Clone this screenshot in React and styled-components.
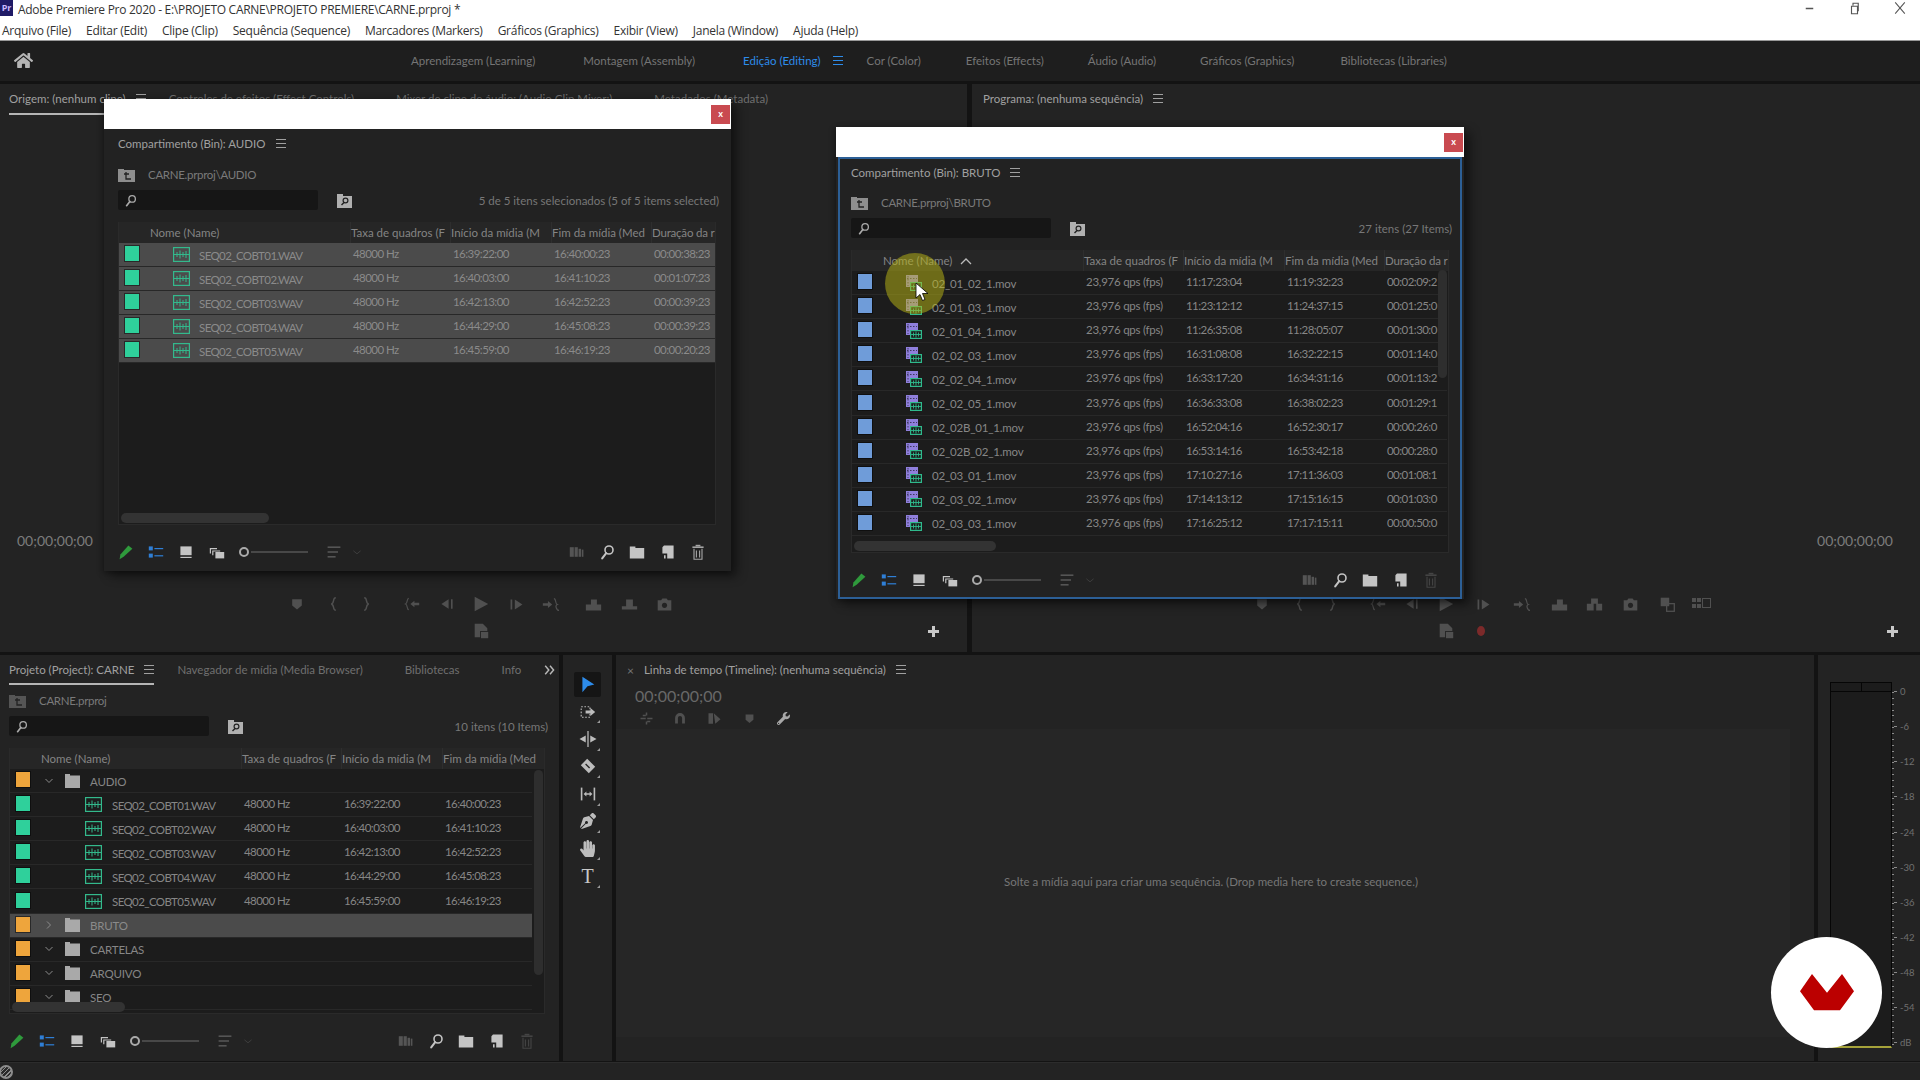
import React from "react";
import styled, { createGlobalStyle } from "styled-components";
import { FaHandPaper, FaPenNib, FaWrench, FaHome } from "react-icons/fa";

const GlobalStyle = createGlobalStyle`
  html, body {
    margin: 0;
    padding: 0;
    background: #131313;
    overflow: hidden;
  }
  * {
    box-sizing: border-box;
  }
`;

const Page = styled.div`
  position: relative;
  width: 1920px;
  height: 1080px;
  display: flex;
  flex-direction: column;
  overflow: hidden;
  background: #131313;
  font-family: "Lato", "Open Sans", sans-serif;
  font-size: 11.5px;
  color: #868686;
`;

/* window chrome */
const TitleBar = styled.div`
  height: 20px;
  background: #fff;
  display: flex;
  align-items: center;
  font-family: "Open Sans", sans-serif;
  font-size: 12px;
  color: #333;
`;

const PrLogo = styled.div`
  width: 13px;
  height: 16px;
  margin: -4px 5px 0 0;
  background: #1f1a66;
  color: #c9b8ff;
  font-size: 9px;
  font-weight: 700;
  text-align: center;
  line-height: 16px;
`;

const TitleText = styled.div`
  flex: 1;
  margin-top: -2px;
  letter-spacing: -0.28px;
`;

const WinButtons = styled.div`
  display: flex;
  align-items: center;
  margin: -4px 12px 0 0;
  gap: 30px;
  color: #555;
`;

const MenuBar = styled.div`
  height: 21px;
  background: #fff;
  border-bottom: 1px solid #999;
  display: flex;
  gap: 15px;
  padding-left: 2px;
  align-items: center;
  font-family: "Open Sans", sans-serif;
  font-size: 12px;
  color: #333;
  letter-spacing: -0.26px;
`;

const WorkspaceBar = styled.div`
  height: 40px;
  padding-bottom: 1px;
  background: #1e1e1e;
  display: flex;
  align-items: center;
  color: #757575;
`;

const HomeSlot = styled.div`
  width: 411px;
  padding-left: 14px;
  color: #b5b5b5;
  display: flex;
`;

const WorkspaceTab = styled.div`
  margin-right: ${(p) => p.$gap || 46}px;
  color: ${(p) => (p.$active ? "#2d8ceb" : "inherit")};
  white-space: nowrap;
`;

const Burger = styled.span`
  display: inline-block;
  flex: none;
  width: 10px;
  height: 9px;
  margin-left: ${(p) => p.$ml ?? 10}px;
  margin-right: ${(p) => p.$mr ?? 0}px;
  background: repeating-linear-gradient(
    to bottom,
    ${(p) => p.$color || "#a0a0a0"} 0 1px,
    transparent 1px 4px
  );
`;

/* layout */
const Main = styled.div`
  flex: 1;
  display: grid;
  grid-template-rows: 568px 406px;
  row-gap: 3px;
  padding-top: 3px;
  min-height: 0;
`;

const TopRow = styled.div`
  display: grid;
  grid-template-columns: 967px 1fr;
  column-gap: 5px;
  min-height: 0;
`;

const BottomRow = styled.div`
  display: grid;
  grid-template-columns: 559px 49px 1198px 1fr;
  column-gap: 4px;
  min-height: 0;
`;

const Panel = styled.section`
  position: relative;
  background: #232323;
  display: flex;
  flex-direction: column;
  min-width: 0;
  min-height: 0;
  overflow: hidden;
`;

const TabRow = styled.div`
  height: ${(p) => p.$h || 30}px;
  flex: none;
  display: flex;
  align-items: center;
  padding-left: ${(p) => p.$pad || 9}px;
  white-space: nowrap;
  position: relative;
`;

const Tab = styled.div`
  display: flex;
  align-items: center;
  height: 100%;
  flex: none;
  padding-bottom: 2px;
  color: ${(p) => (p.$active ? "#a0a0a0" : "#6f6f6f")};
  padding-left: ${(p) => (p.$active ? 0 : 19)}px;
  margin-left: ${(p) => (p.$active ? 0 : 23)}px;
  box-shadow: ${(p) => (p.$underline ? "inset 0 -2px 0 #b5b5b5" : "none")};
  &:nth-child(2) {
    margin-left: 4px;
  }
`;

const CloseMark = styled.span`
  color: #777;
  margin-right: 6px;
  font-size: 12px;
`;

const MoreTabs = styled.div`
  position: absolute;
  right: 3px;
  top: 9px;
  color: #b8b8b8;
  display: flex;
`;

/* monitors */
const MonitorSpace = styled.div`
  flex: 1;
`;

const Timecode = styled.div`
  height: 20px;
  line-height: 20px;
  padding: 0 ${(p) => (p.$right ? 27 : 0)}px 0 ${(p) => (p.$right ? 0 : 17)}px;
  margin-bottom: 43px;
  text-align: ${(p) => (p.$right ? "right" : "left")};
  color: #7c7c7c;
  font-size: 14px;
`;

const TransportRow = styled.div`
  height: 20px;
  flex: none;
  display: grid;
  grid-template-columns: 1fr 20px 1fr;
  padding-right: ${(p) => p.$inset || 0}px;
  margin-bottom: 7px;
`;

const TransportSide = styled.div`
  display: flex;
  align-items: center;
  justify-content: ${(p) => (p.$end ? "flex-end" : "flex-start")};
  padding-right: ${(p) => (p.$end ? 14 : 0)}px;
`;

const Slot = styled.div`
  width: 20px;
  height: 20px;
  flex: none;
  margin-left: ${(p) => p.$ml || 0}px;
  display: flex;
  align-items: center;
  justify-content: center;
  color: ${(p) => p.$color || "#505050"};
`;

const SecondRow = styled.div`
  height: 20px;
  flex: none;
  display: grid;
  grid-template-columns: 1fr 20px 1fr;
  padding-right: ${(p) => p.$inset || 0}px;
  margin-bottom: 11px;
`;

const SecondSide = styled.div`
  display: flex;
  align-items: center;
  justify-content: space-between;
  padding-left: ${(p) => p.$pl || 0}px;
  padding-right: ${(p) => p.$pr || 0}px;
`;

const RecDot = styled.div`
  width: 8px;
  height: 10px;
  border-radius: 50%;
  background: #7c2a2a;
`;

const Plus = styled.div`
  margin-left: auto;
  width: 11px;
  height: 11px;
  background:
    linear-gradient(#c8c8c8, #c8c8c8) center / 11px 3px no-repeat,
    linear-gradient(#c8c8c8, #c8c8c8) center / 3px 11px no-repeat;
`;

/* bin pieces */
const BinBody = styled.div`
  flex: 1;
  min-height: 0;
  display: flex;
  flex-direction: column;
  padding: 0 ${(p) => p.$right || 14}px 0 ${(p) => p.$left || 14}px;
`;

const PathRow = styled.div`
  height: 30px;
  flex: none;
  display: flex;
  align-items: center;
  color: #7a7a7a;
  gap: 13px;
  letter-spacing: -0.3px;
`;

const SearchRow = styled.div`
  height: 21px;
  flex: none;
  margin-bottom: 12px;
  padding-top: 1px;
  display: flex;
  align-items: center;
  color: #777;
`;

const SearchBox = styled.div`
  width: 200px;
  height: 20px;
  background: #161616;
  border-radius: 2px;
  padding-left: 6px;
  display: flex;
  align-items: center;
  color: #aaa;
  margin-right: 19px;
`;

const Count = styled.div`
  margin-left: auto;
  margin-right: -3px;
`;

const List = styled.div`
  position: relative;
  flex: 1;
  min-height: 0;
  overflow: hidden;
  background: #1c1c1c;
  border: 1px solid #2a2a2a;
  border-top: none;
`;

const COLS = "232px 100px 101px 100px 1fr";

const ListHeader = styled.div`
  height: 21px;
  display: grid;
  grid-template-columns: ${COLS};
  background: #262626;
  color: #848484;
  white-space: nowrap;
`;

const HeadCell = styled.div`
  line-height: 20px;
  padding-left: ${(p) => p.$pl ?? 0}px;
  display: flex;
  align-items: center;
  gap: 8px;
  box-shadow: ${(p) => (p.$first ? "none" : "-1px 0 0 #2e2e2e")};
`;

const LastHeadCell = styled(HeadCell)`
  letter-spacing: -0.2px;
`;

const Row = styled.div`
  height: 24.1px;
  display: grid;
  grid-template-columns: ${COLS};
  align-items: center;
  white-space: nowrap;
  border-bottom: 1px solid #282828;
  background: ${(p) => (p.$on ? "#4b4b4b" : "transparent")};
  margin-right: ${(p) => p.$mr || 0}px;
  color: ${(p) => (p.$on ? "#8a8a8a" : "#868686")};
`;

const NameCell = styled.div`
  display: flex;
  align-items: center;
  height: 100%;
  min-width: 0;
`;

const Swatch = styled.div`
  width: 14px;
  height: 15px;
  flex: none;
  margin-left: 6px;
  margin-top: -2px;
  background: ${(p) => p.$color};
  box-shadow: 0 0 0 1px rgba(0, 0, 0, 0.45);
`;

const NameText = styled.span`
  margin-left: ${(p) => p.$ml || 9}px;
  padding-top: 1px;
  letter-spacing: ${(p) => p.$ls ?? -0.2}px;
`;

const Cell = styled.div`
  padding-left: 2px;
  margin-top: -2px;
  letter-spacing: ${(p) => p.$ls ?? -0.55}px;
`;

const IconHolder = styled.div`
  flex: none;
  margin-left: ${(p) => p.$ml || 0}px;
  display: flex;
  align-items: center;
  color: #a0a0a0;
`;

const HScroll = styled.div`
  position: absolute;
  left: 2px;
  bottom: 1px;
  width: ${(p) => p.$w}px;
  height: 10px;
  border-radius: 5px;
  background: #333;
`;

const VScroll = styled.div`
  position: absolute;
  right: 1px;
  top: ${(p) => p.$top}px;
  width: 9px;
  height: ${(p) => p.$h}px;
  border-radius: 5px;
  background: #2e2e2e;
`;

const BinFooter = styled.div`
  height: ${(p) => p.$h}px;
  flex: none;
  display: flex;
  align-items: flex-start;
  padding: 18px 10px 0 0;
  margin: 0 -2px;
  color: #c4c4c4;
`;

const FootSlot = styled.div`
  width: 20px;
  height: 18px;
  flex: none;
  margin-left: ${(p) => p.$ml || 0}px;
  display: flex;
  align-items: center;
  justify-content: center;
  color: ${(p) => p.$color || "inherit"};
`;

const Knob = styled.div`
  width: 10px;
  height: 10px;
  border: 2px solid #aaa;
  border-radius: 50%;
  margin: 4px 0 0 12px;
  flex: none;
`;

const SliderLine = styled.div`
  width: 57px;
  height: 2px;
  background: #484848;
  margin: 8px 0 0 2px;
  flex: none;
`;

const FootSpacer = styled.div`
  flex: 1;
`;

/* floating windows */
const FloatWindow = styled.div`
  position: absolute;
  left: ${(p) => p.$left}px;
  top: ${(p) => p.$top}px;
  width: ${(p) => p.$w}px;
  height: 472px;
  display: flex;
  flex-direction: column;
  box-shadow: 6px 5px 10px rgba(0, 0, 0, 0.45), -1px 2px 6px rgba(0, 0, 0, 0.35);
  z-index: 5;
`;

const WhiteBar = styled.div`
  height: 30px;
  flex: none;
  background: #fff;
  display: flex;
  justify-content: flex-end;
  align-items: center;
  padding-right: 1px;
`;

const CloseBtn = styled.div`
  width: 19px;
  height: 19px;
  background: #c94a50;
  color: #fff;
  font-size: 9px;
  font-weight: 700;
  line-height: 18px;
  text-align: center;
`;

const WindowBody = styled.div`
  flex: 1;
  min-height: 0;
  display: flex;
  flex-direction: column;
  background: #222;
  border: ${(p) => (p.$focus ? "2px solid #2c5f96" : "none")};
  margin: ${(p) => (p.$focus ? "0 2px" : 0)};
`;

const Highlight = styled.div`
  position: absolute;
  left: 885px;
  top: 253px;
  width: 60px;
  height: 61px;
  border-radius: 50%;
  background: rgba(190, 185, 20, 0.5);
  z-index: 6;
`;

const Cursor = styled.svg`
  position: absolute;
  left: 915px;
  top: 282px;
  z-index: 7;
`;

/* tools */
const ToolsPanel = styled(Panel)`
  align-items: center;
  padding-top: 17px;
`;

const Tool = styled.div`
  position: relative;
  width: 27px;
  height: ${(p) => (p.$on ? 25 : 27.4)}px;
  margin-bottom: ${(p) => (p.$on ? 1 : 0)}px;
  flex: none;
  display: flex;
  align-items: center;
  justify-content: center;
  color: ${(p) => (p.$on ? "#2d8ceb" : "#bcbcbc")};
  background: ${(p) => (p.$on ? "#151515" : "transparent")};
  border-radius: 2px;
  &::after {
    content: "";
    display: ${(p) => (p.$on ? "none" : "block")};
    position: absolute;
    right: 1px;
    bottom: 2px;
    border-left: 3px solid transparent;
    border-bottom: 3px solid #999;
  }
`;

const TypeGlyph = styled.span`
  font-family: "Liberation Serif", serif;
  font-size: 20px;
  color: #c8c8c8;
  line-height: 1;
`;

/* timeline */
const TimelineCode = styled.div`
  height: 22px;
  flex: none;
  padding-left: 19px;
  line-height: 22px;
  font-size: 16px;
  color: #686868;
`;

const TimelineTools = styled.div`
  height: 22px;
  flex: none;
  padding-left: 20px;
  display: flex;
  align-items: center;
  color: #555;
`;

const TrackArea = styled.div`
  flex: 1;
  margin: 0 24px 24px 0;
  padding: 0 0 3px 16px;
  background: #262626;
  display: flex;
  align-items: center;
  justify-content: center;
  color: #767676;
`;

/* audio meter */
const MeterPanel = styled(Panel)`
  flex-direction: row;
  padding: 27px 0 0 12px;
`;

const MeterBar = styled.div`
  width: 62px;
  height: 366px;
  flex: none;
  display: flex;
  flex-direction: column;
  border: 1px solid #060606;
  border-bottom: 2px solid #a5a23a;
  background: #1c1c1c;
`;

const MeterTop = styled.div`
  height: 9px;
  flex: none;
  border-bottom: 1px solid #060606;
  background: linear-gradient(#060606, #060606) center / 1px 100% no-repeat;
`;

const Ticks = styled.div`
  width: 2px;
  height: 356px;
  margin-top: 10px;
  flex: none;
  background: repeating-linear-gradient(
    to bottom,
    #8a8a8a 0 1px,
    transparent 1px 5.87px
  );
`;

const Scale = styled.div`
  margin-top: -8px;
  display: flex;
  flex-direction: column;
`;

const ScaleMark = styled.div`
  height: 35.15px;
  display: flex;
  align-items: center;
  font-size: 9.5px;
  color: #707070;
  &::before {
    content: "";
    width: 3px;
    height: 1px;
    background: #8a8a8a;
    margin-right: 3px;
  }
`;

const StatusBar = styled.div`
  flex: none;
  height: 18px;
  margin-top: 2px;
  background: #232323;
  border-top: 1px solid #2c2c2c;
  display: flex;
  align-items: center;
`;

const CcMark = styled.div`
  width: 14px;
  height: 14px;
  margin-left: -1px;
  border-radius: 50%;
  border: 2px solid #8d8d8d;
  background: repeating-linear-gradient(135deg, #8d8d8d 0 1px, #2a2a2a 1px 3px);
`;

const LogoBadge = styled.div`
  position: absolute;
  left: 1771px;
  top: 937px;
  width: 111px;
  height: 111px;
  border-radius: 50%;
  background: #fff;
  display: flex;
  align-items: center;
  justify-content: center;
  z-index: 8;
`;

/* drawings */
const Svg = ({ w = 16, h = 16, box = "0 0 20 20", children, ...rest }) => (
  <svg width={w} height={h} viewBox={box} fill="currentColor" {...rest}>
    {children}
  </svg>
);

const Magnifier = ({ size = 14 }) => (
  <Svg w={size} h={size}>
    <circle cx="12.5" cy="7.5" r="5" fill="none" stroke="currentColor" strokeWidth="2" />
    <path d="M9 11.5 L4 18" stroke="currentColor" strokeWidth="2.6" strokeLinecap="round" />
  </Svg>
);

const UpFolder = ({ dim }) => (
  <Svg w={17} h={15} box="0 0 17 15" style={{ color: dim ? "#555" : "#8e8e8e" }}>
    <path d="M0 2h6v1h11v12H0z" />
    <path d="M8 5v7h5M6 7h5" stroke="#222" strokeWidth="1.3" fill="none" />
  </Svg>
);

const BinSearch = () => (
  <Svg w={15} h={16} box="0 0 15 16" style={{ color: "#b0b0b0" }}>
    <path d="M0 2h6v2h9v12H0z" />
    <circle cx="8.5" cy="8.5" r="2.4" fill="none" stroke="#222" strokeWidth="1.2" />
    <path d="M7 10.5L4.5 13" stroke="#222" strokeWidth="1.4" />
  </Svg>
);

const AudioIcon = () => (
  <Svg w={17} h={15} box="0 0 17 15" style={{ color: "#33b98c" }}>
    <rect x="0.6" y="0.6" width="15.8" height="13.8" fill="none" stroke="currentColor" strokeWidth="1.2" />
    <path d="M1 7.5h15M4 5v5M7 3.5v8M10 5v5M13 4v7" stroke="currentColor" strokeWidth="1" fill="none" />
  </Svg>
);

const MovieIcon = () => (
  <Svg w={16} h={16} box="0 0 16 16">
    <rect x="0" y="0" width="12" height="12" fill="#8f7fdc" />
    <path d="M2 1v10M1 3.5h10" stroke="#2a2740" strokeWidth="0.8" strokeDasharray="1.5 1.5" fill="none" />
    <rect x="4.6" y="7.6" width="10.8" height="7.8" fill="#1c1c1c" stroke="#2fb98c" strokeWidth="1.2" />
    <path d="M5 11.5h10M7.5 9.5v4M10 8.5v6M12.5 9.5v4" stroke="#2fb98c" strokeWidth="0.9" />
  </Svg>
);

const FolderIcon = () => (
  <Svg w={15} h={14} box="0 0 15 14" style={{ color: "#a9a9a9" }}>
    <path d="M0 0h5v1.5h10V14H0z" />
  </Svg>
);

const Chevron = ({ open }) => (
  <Svg w={10} h={10} box="0 0 10 10" style={{ color: "#8c8c8c", transform: open ? "none" : "rotate(-90deg)" }}>
    <path d="M1.5 3L5 6.5 8.5 3" fill="none" stroke="currentColor" strokeWidth="1" />
  </Svg>
);

const draw = {
  shield: <path d="M4 4h12v8l-6 5-6-5z" />,
  markIn: <path d="M12 3C8 3 11 9 7 10c4 1 1 7 5 7" fill="none" stroke="currentColor" strokeWidth="1.6" />,
  markOut: <path d="M8 3c4 0 1 6 5 7-4 1-1 7-5 7" fill="none" stroke="currentColor" strokeWidth="1.6" />,
  goIn: (
    <>
      <path d="M6 3C3 3 5 9 2 10c3 1 1 7 4 7" fill="none" stroke="currentColor" strokeWidth="1.4" />
      <path d="M8 10l5-4v2.5h6v3h-6V14z" />
    </>
  ),
  stepBack: <path d="M3 10l9-6v12zM15 4h2v12h-2z" />,
  play: <path d="M3 2l15 8-15 8z" />,
  stepFwd: <path d="M3 4h2v12H3zM8 4l9 6-9 6z" />,
  goOut: (
    <>
      <path d="M1 8.5h6V6l5 4-5 4v-2.5H1z" />
      <path d="M14 3c3 0 1 6 4 7-3 1-1 7 2 7" fill="none" stroke="currentColor" strokeWidth="1.4" />
    </>
  ),
  lift: <path d="M1 10h6V4h7v6h5v7H1z" />,
  extract: <path d="M1 12h5V4h8v8h5v4H1z" />,
  exportIn: <path d="M6 3h8v6h5v8h-7V9H9v8H1V9h5z" />,
  camera: (
    <>
      <path d="M2 5h4l1.5-2h5L14 5h4v12H2z" />
      <circle cx="10" cy="11" r="3" fill="#232323" />
    </>
  ),
  compare: (
    <>
      <rect x="2" y="2" width="10" height="10" />
      <rect x="9" y="9" width="9" height="9" fill="none" stroke="currentColor" strokeWidth="1.5" />
    </>
  ),
  multi: (
    <>
      <rect x="1" y="4" width="4" height="4" />
      <rect x="6" y="4" width="4" height="4" />
      <rect x="1" y="10" width="4" height="4" />
      <rect x="6" y="10" width="4" height="4" />
      <rect x="11.5" y="4.5" width="8" height="9" fill="none" stroke="currentColor" />
    </>
  ),
  toggle: (
    <>
      <path d="M3 2h9l5 5v3h-8v7H3z" />
      <rect x="10" y="11" width="8" height="7" />
    </>
  ),
  pencil: <path d="M13 2l5 4L7 16l-5 3 1-6z" />,
  listView: (
    <>
      <rect x="1" y="3" width="5" height="5" />
      <rect x="1" y="12" width="5" height="5" />
      <rect x="8" y="5" width="11" height="1.5" />
      <rect x="8" y="14" width="11" height="1.5" />
    </>
  ),
  iconView: (
    <>
      <rect x="3" y="3" width="14" height="11" />
      <rect x="3" y="16" width="14" height="1.5" />
    </>
  ),
  freeform: (
    <>
      <path d="M1 5h9v1.5H2.5V12H1z" />
      <path d="M4 8h10v1.5H5.5V14H4z" />
      <rect x="8" y="10" width="11" height="8" />
    </>
  ),
  sortMenu: (
    <>
      <rect x="2" y="3" width="16" height="2" />
      <rect x="2" y="9" width="13" height="2" />
      <rect x="2" y="15" width="10" height="2" />
    </>
  ),
  chevDown: <path d="M4 8l6 5 6-5" fill="none" stroke="currentColor" strokeWidth="1.3" />,
  automate: (
    <>
      <rect x="1" y="4" width="5" height="12" />
      <rect x="7" y="4" width="4" height="12" />
      <rect x="12" y="6" width="3" height="10" />
      <rect x="16" y="7" width="2" height="9" />
    </>
  ),
  newBin: <path d="M1 3h7v2h11v13H1z" />,
  newItem: <path d="M5 2h12v16H9v-6H3V4zM5 14h2v4H5z" />,
  trash: (
    <>
      <rect x="3" y="3" width="14" height="2" />
      <rect x="7" y="1" width="6" height="2" />
      <path d="M5 6v13h10V6M8 8v9M12 8v9" fill="none" stroke="currentColor" strokeWidth="1.4" />
    </>
  ),
  select: <path d="M4 1l14 9-8 2-6 7z" />,
  track: (
    <>
      <rect x="1.5" y="3.5" width="11" height="13" fill="none" stroke="currentColor" strokeWidth="1.4" strokeDasharray="2 2" />
      <path d="M7 8h6V5l6 5-6 5v-3H7z" />
    </>
  ),
  ripple: <path d="M9.3 1h1.4v18H9.3zM7.5 6v8L0.5 10zM12.5 6v8l7-4z" />,
  razor: (
    <>
      <path d="M9 1l10 10-8 8L1 9z" />
      <path d="M7 7.5l5 5" stroke="#232323" strokeWidth="1.6" />
    </>
  ),
  slip: (
    <>
      <rect x="1" y="2" width="2" height="16" />
      <rect x="17" y="2" width="2" height="16" />
      <path d="M4.5 10L8 7v2h4V7l3.5 3-3.5 3v-2H8v2z" />
    </>
  ),
  rippleTl: <path d="M9 2h2v4H9zM9 14h2v4H9zM2 9h7v2H2zM11 9h7v2h-7zM5 5h4v2H5zM11 13h4v2h-4z" />,
  snap: <path d="M3 18V10a7 7 0 0 1 14 0v8h-4v-8a3 3 0 0 0-6 0v8z" />,
  linked: (
    <>
      <rect x="2" y="3" width="6" height="14" />
      <path d="M9 3l9 8-7 6z" />
    </>
  ),
  minimize: <rect x="5" y="9" width="10" height="2" />,
  restore: <path d="M6 7h8v10H6zM8 6V3h7v10h-1" fill="none" stroke="currentColor" strokeWidth="1.5" />,
  close: <path d="M4 3l12 14M16 3L4 17" fill="none" stroke="currentColor" strokeWidth="1.3" />,
  more: <path d="M2 3l6 7-6 7M10 3l6 7-6 7" fill="none" stroke="currentColor" strokeWidth="2.4" />,
};

const Draw = ({ name, size = 16 }) => <Svg w={size} h={size}>{draw[name]}</Svg>;

const AUDIO = [
  ["SEQ02_COBT01.WAV", "16:39:22:00", "16:40:00:23", "00:00:38:23"],
  ["SEQ02_COBT02.WAV", "16:40:03:00", "16:41:10:23", "00:01:07:23"],
  ["SEQ02_COBT03.WAV", "16:42:13:00", "16:42:52:23", "00:00:39:23"],
  ["SEQ02_COBT04.WAV", "16:44:29:00", "16:45:08:23", "00:00:39:23"],
  ["SEQ02_COBT05.WAV", "16:45:59:00", "16:46:19:23", "00:00:20:23"],
];

// durations stop where the column ends in the bin
const CLIPS = [
  ["02_01_02_1.mov", "11:17:23:04", "11:19:32:23", "00:02:09:2"],
  ["02_01_03_1.mov", "11:23:12:12", "11:24:37:15", "00:01:25:0"],
  ["02_01_04_1.mov", "11:26:35:08", "11:28:05:07", "00:01:30:0"],
  ["02_02_03_1.mov", "16:31:08:08", "16:32:22:15", "00:01:14:0"],
  ["02_02_04_1.mov", "16:33:17:20", "16:34:31:16", "00:01:13:2"],
  ["02_02_05_1.mov", "16:36:33:08", "16:38:02:23", "00:01:29:1"],
  ["02_02B_01_1.mov", "16:52:04:16", "16:52:30:17", "00:00:26:0"],
  ["02_02B_02_1.mov", "16:53:14:16", "16:53:42:18", "00:00:28:0"],
  ["02_03_01_1.mov", "17:10:27:16", "17:11:36:03", "00:01:08:1"],
  ["02_03_02_1.mov", "17:14:13:12", "17:15:16:15", "00:01:03:0"],
  ["02_03_03_1.mov", "17:16:25:12", "17:17:15:11", "00:00:50:0"],
];

const BINS = [
  { name: "BRUTO", open: false, on: true },
  { name: "CARTELAS", open: true },
  { name: "ARQUIVO", open: true },
  { name: "SEO", open: true },
];

const ORANGE = "#eea53c";
const GREEN = "#2fd09b";
const BLUE = "#6f9cd9";

const Header = ({ sorted, short }) => (
  <ListHeader>
    <HeadCell $first $pl={31}>
      <span>Nome (Name)</span>
      {sorted && (
        <Svg w={12} h={8} box="0 0 12 8" style={{ color: "#bbb" }}>
          <path d="M1 7l5-5 5 5" fill="none" stroke="currentColor" strokeWidth="1.3" />
        </Svg>
      )}
    </HeadCell>
    <HeadCell>Taxa de quadros (F</HeadCell>
    <HeadCell>Início da mídia (M</HeadCell>
    <HeadCell>Fim da mídia (Med</HeadCell>
    {!short && <LastHeadCell>Duração da r</LastHeadCell>}
  </ListHeader>
);

const FootIcons = ({ trashDim, h }) => (
  <BinFooter $h={h}>
    <FootSlot $color="#2f9a3c"><Draw name="pencil" /></FootSlot>
    <FootSlot $ml={10} $color="#2f7fd6"><Draw name="listView" /></FootSlot>
    <FootSlot $ml={10}><Draw name="iconView" /></FootSlot>
    <FootSlot $ml={11}><Draw name="freeform" /></FootSlot>
    <Knob />
    <SliderLine />
    <FootSlot $ml={16} $color="#555"><Draw name="sortMenu" /></FootSlot>
    <FootSlot $ml={3} $color="#444"><Draw name="chevDown" size={12} /></FootSlot>
    <FootSpacer />
    <FootSlot $color="#555"><Draw name="automate" /></FootSlot>
    <FootSlot $ml={10}><Magnifier size={16} /></FootSlot>
    <FootSlot $ml={10}><Draw name="newBin" /></FootSlot>
    <FootSlot $ml={11}><Draw name="newItem" /></FootSlot>
    <FootSlot $ml={10} $color={trashDim ? "#444" : "#a5a5a5"}><Draw name="trash" /></FootSlot>
  </BinFooter>
);

const SearchLine = ({ label }) => (
  <SearchRow>
    <SearchBox><Magnifier size={13} /></SearchBox>
    <BinSearch />
    <Count>{label}</Count>
  </SearchRow>
);

const TopMonitor = ({ tabs, pad, alignRight, inset, leftSet, rightSet, second }) => (
  <Panel>
    <TabRow $pad={pad} $h={31}>{tabs}</TabRow>
    <MonitorSpace />
    <Timecode $right={alignRight}>00;00;00;00</Timecode>
    <TransportRow $inset={inset}>
      <TransportSide $end>
        {leftSet.map(([n, ml], i) => (
          <Slot key={i} $ml={ml}><Draw name={n} size={n === "markIn" || n === "markOut" ? 18 : 16} /></Slot>
        ))}
      </TransportSide>
      <Slot><Draw name="play" size={18} /></Slot>
      <TransportSide>
        {rightSet.map(([n, ml], i) => (
          <Slot key={i} $ml={ml}><Draw name={n} size={n === "multi" ? 20 : 17} /></Slot>
        ))}
      </TransportSide>
    </TransportRow>
    <SecondRow $inset={inset}>
      <span />
      <Slot><Draw name="toggle" size={18} /></Slot>
      {second}
    </SecondRow>
  </Panel>
);

const sourceLeft = [["shield"], ["markIn", 17], ["markOut", 12], ["goIn", 26], ["stepBack", 15]];
const sourceRight = [["stepFwd", 16], ["goOut", 14], ["lift", 23], ["extract", 16], ["camera", 15]];
const programLeft = [["shield"], ["markIn", 18], ["markOut", 12], ["goIn", 26], ["stepBack", 14]];
const programRight = [["stepFwd", 17], ["goOut", 18], ["lift", 18], ["exportIn", 15], ["camera", 16], ["compare", 17], ["multi", 14]];

const App = () => (
  <Page>
    <GlobalStyle />
    <TitleBar>
      <PrLogo>Pr</PrLogo>
      <TitleText>Adobe Premiere Pro 2020 - E:\PROJETO CARNE\PROJETO PREMIERE\CARNE.prproj *</TitleText>
      <WinButtons>
        <Draw name="minimize" size={15} />
        <Draw name="restore" size={15} />
        <Draw name="close" size={16} />
      </WinButtons>
    </TitleBar>
    <MenuBar>
      {[
        "Arquivo (File)",
        "Editar (Edit)",
        "Clipe (Clip)",
        "Sequência (Sequence)",
        "Marcadores (Markers)",
        "Gráficos (Graphics)",
        "Exibir (View)",
        "Janela (Window)",
        "Ajuda (Help)",
      ].map((m) => (
        <span key={m}>{m}</span>
      ))}
    </MenuBar>
    <WorkspaceBar>
      <HomeSlot><FaHome size={19} /></HomeSlot>
      <WorkspaceTab $gap={48}>Aprendizagem (Learning)</WorkspaceTab>
      <WorkspaceTab $gap={48}>Montagem (Assembly)</WorkspaceTab>
      <WorkspaceTab $active $gap={12}>Edição (Editing)</WorkspaceTab>
      <Burger $ml={0} $mr={24} $color="#2d8ceb" />
      <WorkspaceTab $gap={45}>Cor (Color)</WorkspaceTab>
      <WorkspaceTab $gap={44}>Efeitos (Effects)</WorkspaceTab>
      <WorkspaceTab $gap={44}>Áudio (Audio)</WorkspaceTab>
      <WorkspaceTab>Gráficos (Graphics)</WorkspaceTab>
      <WorkspaceTab>Bibliotecas (Libraries)</WorkspaceTab>
    </WorkspaceBar>

    <Main>
      <TopRow>
        <TopMonitor
          inset={6}
          leftSet={sourceLeft}
          rightSet={sourceRight}
          tabs={
            <>
              <Tab $active $underline>
                Origem: (nenhum clipe)
                <Burger />
              </Tab>
              <Tab>Controles de efeitos (Effect Controls)</Tab>
              <Tab>Mixer de clipe de áudio: (Audio Clip Mixer:)</Tab>
              <Tab>Metadados (Metadata)</Tab>
            </>
          }
          second={
            <SecondSide $pr={22}>
              <Plus />
            </SecondSide>
          }
        />
        <TopMonitor
          pad={11}
          alignRight
          leftSet={programLeft}
          rightSet={programRight}
          tabs={
            <Tab $active>
              Programa: (nenhuma sequência)
              <Burger />
            </Tab>
          }
          second={
            <SecondSide $pl={21} $pr={22}>
              <RecDot />
              <Plus />
            </SecondSide>
          }
        />
      </TopRow>

      <BottomRow>
        <Panel>
          <TabRow>
            <Tab $active $underline>
              Projeto (Project): CARNE
              <Burger />
            </Tab>
            <Tab>Navegador de mídia (Media Browser)</Tab>
            <Tab>Bibliotecas</Tab>
            <Tab>Info</Tab>
            <MoreTabs><Draw name="more" size={12} /></MoreTabs>
          </TabRow>
          <BinBody $left={9}>
            <PathRow>
              <UpFolder dim />
              CARNE.prproj
            </PathRow>
            <SearchLine label="10 itens (10 Items)" />
            <List>
              <Header short />
              <Row $mr={12}>
                <NameCell>
                  <Swatch $color={ORANGE} />
                  <IconHolder $ml={14}><Chevron open /></IconHolder>
                  <IconHolder $ml={11}><FolderIcon /></IconHolder>
                  <NameText $ml={10}>AUDIO</NameText>
                </NameCell>
              </Row>
              {AUDIO.map((a) => (
                <Row key={a[0]} $mr={12}>
                  <NameCell>
                    <Swatch $color={GREEN} />
                    <IconHolder $ml={55}><AudioIcon /></IconHolder>
                    <NameText $ml={10} $ls={-0.6}>{a[0]}</NameText>
                  </NameCell>
                  <Cell>48000 Hz</Cell>
                  <Cell>{a[1]}</Cell>
                  <Cell>{a[2]}</Cell>
                </Row>
              ))}
              {BINS.map((b) => (
                <Row key={b.name} $on={b.on} $mr={12}>
                  <NameCell>
                    <Swatch $color={ORANGE} />
                    <IconHolder $ml={14}><Chevron open={b.open} /></IconHolder>
                    <IconHolder $ml={11}><FolderIcon /></IconHolder>
                    <NameText $ml={10}>{b.name}</NameText>
                  </NameCell>
                </Row>
              ))}
              <VScroll $top={22} $h={205} />
              <HScroll $w={113} />
            </List>
            <FootIcons trashDim h={47} />
          </BinBody>
        </Panel>

        <ToolsPanel>
          <Tool $on><Draw name="select" size={17} /></Tool>
          <Tool><Draw name="track" /></Tool>
          <Tool><Draw name="ripple" size={18} /></Tool>
          <Tool><Draw name="razor" /></Tool>
          <Tool><Draw name="slip" /></Tool>
          <Tool><FaPenNib size={16} /></Tool>
          <Tool><FaHandPaper size={17} /></Tool>
          <Tool><TypeGlyph>T</TypeGlyph></Tool>
        </ToolsPanel>

        <Panel>
          <TabRow $pad={11}>
            <CloseMark>×</CloseMark>
            <Tab $active>
              Linha de tempo (Timeline): (nenhuma sequência)
              <Burger />
            </Tab>
          </TabRow>
          <TimelineCode>00;00;00;00</TimelineCode>
          <TimelineTools>
            <Slot><Draw name="rippleTl" size={15} /></Slot>
            <Slot $ml={14}><Draw name="snap" size={14} /></Slot>
            <Slot $ml={14}><Draw name="linked" size={15} /></Slot>
            <Slot $ml={15}><Draw name="shield" size={13} /></Slot>
            <Slot $ml={14} $color="#a8a8a8"><FaWrench size={13} /></Slot>
          </TimelineTools>
          <TrackArea>Solte a mídia aqui para criar uma sequência. (Drop media here to create sequence.)</TrackArea>
        </Panel>

        <MeterPanel>
          <MeterBar>
            <MeterTop />
          </MeterBar>
          <Ticks />
          <Scale>
            {["0", "-6", "-12", "-18", "-24", "-30", "-36", "-42", "-48", "-54", "dB"].map((v) => (
              <ScaleMark key={v}>{v}</ScaleMark>
            ))}
          </Scale>
        </MeterPanel>
      </BottomRow>
    </Main>

    <StatusBar><CcMark /></StatusBar>

    <FloatWindow $left={104} $top={99} $w={627}>
      <WhiteBar><CloseBtn>x</CloseBtn></WhiteBar>
      <WindowBody>
        <TabRow $pad={14}>
          <Tab $active>
            Compartimento (Bin): AUDIO
            <Burger />
          </Tab>
        </TabRow>
        <BinBody $right={15}>
          <PathRow>
            <UpFolder />
            CARNE.prproj\AUDIO
          </PathRow>
          <SearchLine label="5 de 5 itens selecionados (5 of 5 items selected)" />
          <List>
            <Header />
            {AUDIO.map((a) => (
              <Row key={a[0]} $on>
                <NameCell>
                  <Swatch $color={GREEN} />
                  <IconHolder $ml={34}><AudioIcon /></IconHolder>
                  <NameText $ls={-0.6}>{a[0]}</NameText>
                </NameCell>
                <Cell>48000 Hz</Cell>
                <Cell>{a[1]}</Cell>
                <Cell>{a[2]}</Cell>
                <Cell>{a[3]}</Cell>
              </Row>
            ))}
            <HScroll $w={148} />
          </List>
          <FootIcons h={46} />
        </BinBody>
      </WindowBody>
    </FloatWindow>

    <FloatWindow $left={836} $top={127} $w={628}>
      <WhiteBar><CloseBtn>x</CloseBtn></WhiteBar>
      <WindowBody $focus>
        <TabRow $h={28} $pad={11}>
          <Tab $active>
            Compartimento (Bin): BRUTO
            <Burger />
          </Tab>
        </TabRow>
        <BinBody $left={11} $right={11}>
          <PathRow>
            <UpFolder />
            CARNE.prproj\BRUTO
          </PathRow>
          <SearchLine label="27 itens (27 Items)" />
          <List>
            <Header sorted />
            {CLIPS.map((c) => (
              <Row key={c[0]} $mr={1}>
                <NameCell>
                  <Swatch $color={BLUE} />
                  <IconHolder $ml={34}><MovieIcon /></IconHolder>
                  <NameText $ml={10}>{c[0]}</NameText>
                </NameCell>
                <Cell $ls={-0.25}>23,976 qps (fps)</Cell>
                <Cell>{c[1]}</Cell>
                <Cell>{c[2]}</Cell>
                <Cell>{c[3]}</Cell>
              </Row>
            ))}
            <VScroll $top={20} $h={108} />
            <HScroll $w={142} />
          </List>
          <FootIcons trashDim h={44} />
        </BinBody>
      </WindowBody>
    </FloatWindow>

    <Highlight />
    <Cursor width="14" height="20" viewBox="0 0 14 20">
      <path d="M1 1v15l4-3.5 2.5 6 2.5-1-2.5-6H13z" fill="#fff" stroke="#000" strokeWidth="0.8" />
    </Cursor>

    <LogoBadge>
      <svg width="54" height="37" viewBox="0 0 54 37">
        <polygon points="12,0 27,18.7 42,0 54,17.3 40,36.3 14,36.3 0,17.3" fill="#bb0000" />
      </svg>
    </LogoBadge>
  </Page>
);

export default App;
